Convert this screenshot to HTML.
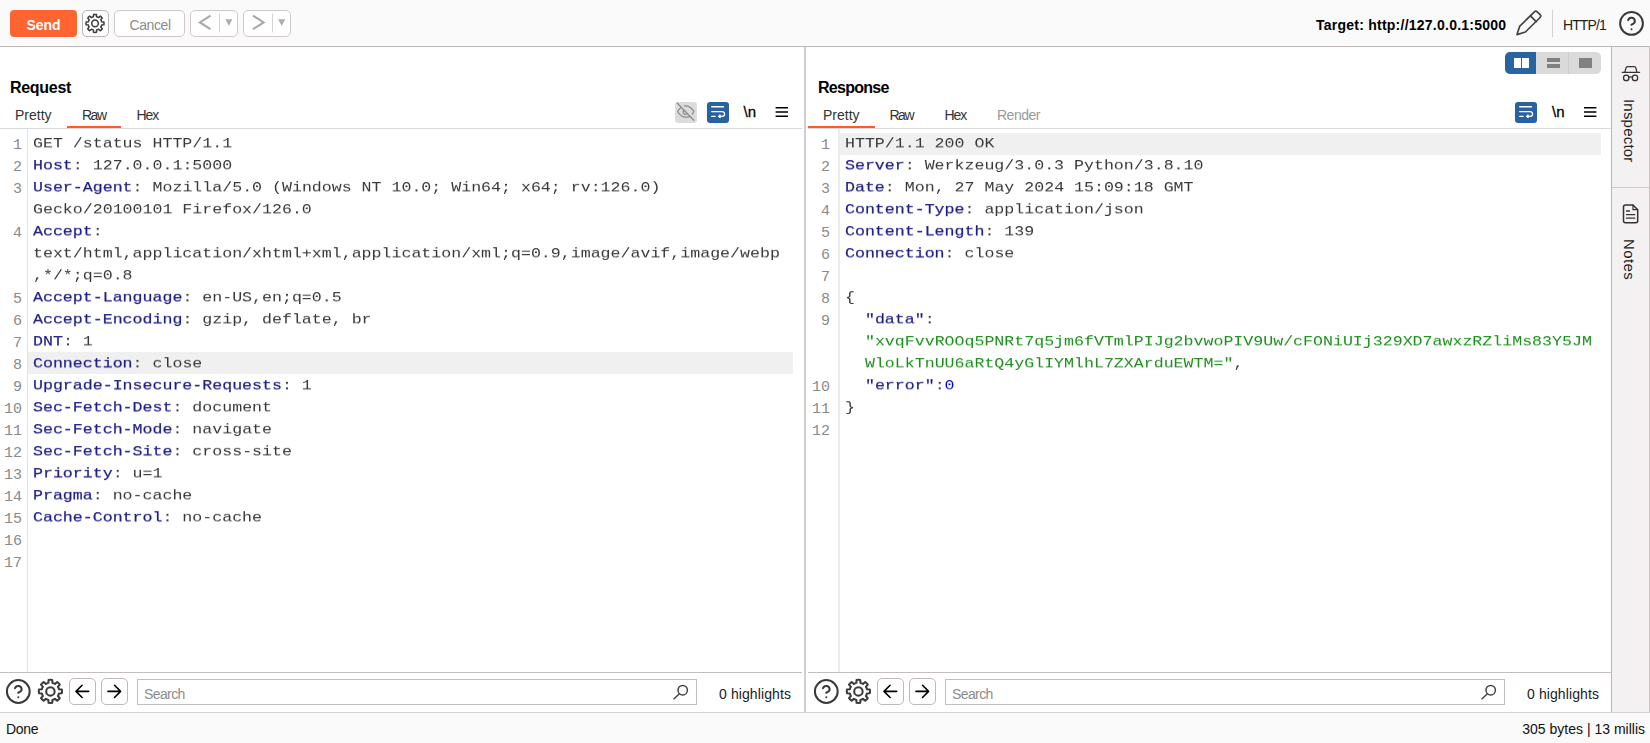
<!DOCTYPE html>
<html><head><meta charset="utf-8">
<style>
*{box-sizing:border-box;margin:0;padding:0}
html,body{width:1650px;height:743px;overflow:hidden;background:#fff}
body{font-family:"Liberation Sans",sans-serif;font-size:14px;color:#000;position:relative}
.abs{position:absolute}
.btn{position:absolute;top:10px;height:27px;border:1px solid #bcb5b5;border-radius:5px;background:#fff}
.sbtn{position:absolute;top:678px;height:27px;width:27px;border:1px solid #c0b9b9;border-radius:5px;background:#fff}
.t{position:absolute;white-space:nowrap;line-height:16px;height:16px}
.mono{font-family:"Liberation Mono",monospace;font-size:16.6px;white-space:pre;position:absolute;line-height:26px;color:#383838;transform:scaleY(.846154);transform-origin:0 0;will-change:transform}
.h{color:#1e1e8a;-webkit-text-stroke:.25px #1e1e8a}
.ln{position:absolute;font-family:"Liberation Mono",monospace;font-size:15px;color:#8a8a8a;text-align:right;line-height:22px;white-space:pre}
.hl{position:absolute;background:#f0f0f0;height:22px}
.g{color:#1a901a}
.b{color:#0000e6}
.k{color:#1e1e8a;-webkit-text-stroke:.2px #1e1e8a}
svg{position:absolute;left:0;top:0;overflow:visible}
</style></head><body>
<!-- top toolbar -->
<div class="abs" style="left:0;top:0;width:1650px;height:45px;background:#fafafa"></div>
<div class="abs" style="left:0;top:46px;width:1650px;height:1px;background:#bdb6b6"></div>
<div class="btn" style="left:10px;width:67px;background:#ff6431;border:none;border-radius:4px;box-shadow:0 0 0 1px #fff"></div>
<div class="t" style="left:10px;width:67px;top:17px;text-align:center;color:#fff;font-weight:bold;font-size:14px">Send</div>
<div class="btn" style="left:82px;width:27px"></div>
<div class="btn" style="left:114px;width:71px;border-color:#d0cbcb"></div>
<div class="t" style="left:129.5px;top:17px;font-size:14px;color:#8c8c8c;letter-spacing:-.4px">Cancel</div>
<div class="btn" style="left:190px;width:48px;border-color:#d0cbcb"></div>
<div class="btn" style="left:243px;width:48px;border-color:#d0cbcb"></div>
<div class="t" style="left:1316px;top:17px;font-size:14px;font-weight:bold;letter-spacing:.24px">Target: http://127.0.0.1:5000</div>
<div class="abs" style="left:1552px;top:10px;width:1px;height:27px;background:#d2d2d2"></div>
<div class="t" style="left:1563px;top:17px;font-size:14px;color:#222;letter-spacing:-.9px">HTTP/1</div>

<!-- right sidebar -->
<div class="abs" style="left:1611px;top:47px;width:39px;height:665px;background:#f3f1f1;border-left:1px solid #bdb6b6;border-right:1px solid #c8c2c2"></div>
<div class="abs" style="left:1612px;top:187px;width:37px;height:1px;background:#d0caca"></div>
<div class="t" style="left:1621px;top:99px;font-size:15px;letter-spacing:.2px;color:#222;transform-origin:0 100%;transform:translateY(-16px) rotate(90deg)">Inspector</div>
<div class="t" style="left:1621px;top:239px;font-size:15px;letter-spacing:.4px;color:#222;transform-origin:0 100%;transform:translateY(-16px) rotate(90deg)">Notes</div>

<!-- divider -->
<div class="abs" style="left:804px;top:47px;width:2px;height:665px;background:#d2cece"></div>

<!-- Request panel -->
<div class="t" style="left:10px;top:80px;font-size:16px;letter-spacing:-.3px;font-weight:bold">Request</div>
<div class="t" style="left:15px;top:107px;font-size:14px;color:#333">Pretty</div>
<div class="t" style="left:82px;top:107px;font-size:14px;color:#333;letter-spacing:-1.5px">Raw</div>
<div class="t" style="left:136.5px;top:107px;font-size:14px;color:#333;letter-spacing:-1.1px">Hex</div>
<div class="abs" style="left:0;top:128px;width:802px;height:1px;background:#d6dada"></div>
<div class="abs" style="left:67px;top:126px;width:54px;height:2px;background:#ff5a1f"></div>
<div class="abs" style="left:27px;top:129px;width:1px;height:543px;background:#e2e2e2"></div>
<div class="hl" style="left:28px;top:352px;width:765px"></div>
<div class="abs" style="left:675px;top:102px;width:22px;height:21px;border-radius:3px;background:#dcdcdc"></div>
<div class="abs" style="left:707px;top:102px;width:22px;height:21px;border-radius:3px;background:#2862a0"></div>
<div class="t" style="left:743.5px;top:104px;font-size:15px;color:#000;-webkit-text-stroke:.3px #000">\n</div>
<div class="ln" style="left:-18px;top:135px;width:40px">1
2
3

4


5
6
7
8
9
10
11
12
13
14
15
16
17</div>
<div class="mono" style="left:33px;top:133px">GET /status HTTP/1.1
<span class="h">Host</span>: 127.0.0.1:5000
<span class="h">User-Agent</span>: Mozilla/5.0 (Windows NT 10.0; Win64; x64; rv:126.0)
Gecko/20100101 Firefox/126.0
<span class="h">Accept</span>:
text/html,application/xhtml+xml,application/xml;q=0.9,image/avif,image/webp
,*/*;q=0.8
<span class="h">Accept-Language</span>: en-US,en;q=0.5
<span class="h">Accept-Encoding</span>: gzip, deflate, br
<span class="h">DNT</span>: 1
<span class="h">Connection</span>: close
<span class="h">Upgrade-Insecure-Requests</span>: 1
<span class="h">Sec-Fetch-Dest</span>: document
<span class="h">Sec-Fetch-Mode</span>: navigate
<span class="h">Sec-Fetch-Site</span>: cross-site
<span class="h">Priority</span>: u=1
<span class="h">Pragma</span>: no-cache
<span class="h">Cache-Control</span>: no-cache

</div>
<div class="abs" style="left:0;top:672px;width:802px;height:1px;background:#c4bebe"></div>
<div class="sbtn" style="left:69px"></div>
<div class="sbtn" style="left:101px"></div>
<div class="abs" style="left:137px;top:679px;width:560px;height:26px;border:1px solid #c4bdbd;background:#fff"></div>
<div class="t" style="left:144px;top:686px;font-size:14px;color:#8c8c8c;letter-spacing:-.6px">Search</div>
<div class="t" style="left:719px;top:686px;font-size:14px;color:#222;letter-spacing:.1px">0 highlights</div>

<!-- Response panel -->
<div class="abs" style="left:1505px;top:52px;width:96px;height:22px;border-radius:5px;background:#dadada;overflow:hidden">
  <div class="abs" style="left:0;top:0;width:31px;height:22px;background:#2a64a0"></div>
  <div class="abs" style="left:63px;top:0;width:1px;height:22px;background:#cdcdcd"></div>
  <div class="abs" style="left:8.5px;top:6px;width:7px;height:10px;background:#fff"></div>
  <div class="abs" style="left:17px;top:6px;width:7px;height:10px;background:#fff"></div>
  <div class="abs" style="left:42px;top:6px;width:13px;height:4px;background:#808080"></div>
  <div class="abs" style="left:42px;top:12px;width:13px;height:4px;background:#808080"></div>
  <div class="abs" style="left:74px;top:6px;width:13px;height:10px;background:#808080"></div>
</div>
<div class="t" style="left:818px;top:80px;font-size:16px;letter-spacing:-.72px;font-weight:bold">Response</div>
<div class="t" style="left:823px;top:107px;font-size:14px;color:#333">Pretty</div>
<div class="t" style="left:889.5px;top:107px;font-size:14px;color:#333;letter-spacing:-1.5px">Raw</div>
<div class="t" style="left:944.5px;top:107px;font-size:14px;color:#333;letter-spacing:-1.1px">Hex</div>
<div class="t" style="left:997px;top:107px;font-size:14px;color:#9a9a9a;letter-spacing:-.5px">Render</div>
<div class="abs" style="left:808px;top:128px;width:803px;height:1px;background:#d6dada"></div>
<div class="abs" style="left:808px;top:126px;width:67px;height:2px;background:#ff5a1f"></div>
<div class="abs" style="left:838px;top:129px;width:2px;height:543px;background:#ececec"></div>
<div class="hl" style="left:840px;top:133px;width:761px"></div>
<div class="abs" style="left:1515px;top:102px;width:22px;height:21px;border-radius:3px;background:#2862a0"></div>
<div class="t" style="left:1552px;top:104px;font-size:15px;color:#000;-webkit-text-stroke:.3px #000">\n</div>
<div class="ln" style="left:790px;top:135px;width:40px">1
2
3
4
5
6
7
8
9


10
11
12</div>
<div class="mono" style="left:845px;top:133px">HTTP/1.1 200 OK
<span class="h">Server</span>: Werkzeug/3.0.3 Python/3.8.10
<span class="h">Date</span>: Mon, 27 May 2024 15:09:18 GMT
<span class="h">Content-Type</span>: application/json
<span class="h">Content-Length</span>: 139
<span class="h">Connection</span>: close

{
  <span class="k">"data"</span>:
  <span class="g">"xvqFvvROOq5PNRt7q5jm6fVTmlPIJg2bvwoPIV9Uw/cFONiUIj329XD7awxzRZliMs83Y5JM</span>
  <span class="g">WloLkTnUU6aRtQ4yGlIYMlhL7ZXArduEWTM="</span>,
  <span class="k">"error"</span>:<span class="b">0</span>
}
</div>
<div class="abs" style="left:808px;top:672px;width:803px;height:1px;background:#c4bebe"></div>
<div class="sbtn" style="left:877px"></div>
<div class="sbtn" style="left:909px"></div>
<div class="abs" style="left:945px;top:679px;width:560px;height:26px;border:1px solid #c4bdbd;background:#fff"></div>
<div class="t" style="left:952px;top:686px;font-size:14px;color:#8c8c8c;letter-spacing:-.6px">Search</div>
<div class="t" style="left:1527px;top:686px;font-size:14px;color:#222;letter-spacing:.1px">0 highlights</div>

<!-- status bar -->
<div class="abs" style="left:0;top:712px;width:1650px;height:2px;background:#fff"></div><div class="abs" style="left:0;top:714px;width:1650px;height:29px;background:#fafafa"></div>
<div class="abs" style="left:0;top:712px;width:1650px;height:1px;background:#d0d0d0"></div>
<div class="t" style="left:6px;top:721px;font-size:14px;color:#111;letter-spacing:-.3px">Done</div>
<div class="t" style="right:5px;top:721px;font-size:14px;color:#111">305 bytes | 13 millis</div>

<!-- icons -->
<svg width="1650" height="743" viewBox="0 0 1650 743" fill="none" stroke-linecap="round" stroke-linejoin="round">
<defs>
 <g id="gear"><path d="M-1.75 -7.29L-1.55 -9.78A9.90 9.90 0 0 1 1.55 -9.78L1.75 -7.29A7.50 7.50 0 0 1 3.92 -6.39L3.92 -6.39L5.82 -8.01A9.90 9.90 0 0 1 8.01 -5.82L6.39 -3.92A7.50 7.50 0 0 1 7.29 -1.75L7.29 -1.75L9.78 -1.55A9.90 9.90 0 0 1 9.78 1.55L7.29 1.75A7.50 7.50 0 0 1 6.39 3.92L6.39 3.92L8.01 5.82A9.90 9.90 0 0 1 5.82 8.01L3.92 6.39A7.50 7.50 0 0 1 1.75 7.29L1.75 7.29L1.55 9.78A9.90 9.90 0 0 1 -1.55 9.78L-1.75 7.29A7.50 7.50 0 0 1 -3.92 6.39L-3.92 6.39L-5.82 8.01A9.90 9.90 0 0 1 -8.01 5.82L-6.39 3.92A7.50 7.50 0 0 1 -7.29 1.75L-7.29 1.75L-9.78 1.55A9.90 9.90 0 0 1 -9.78 -1.55L-7.29 -1.75A7.50 7.50 0 0 1 -6.39 -3.92L-6.39 -3.92L-8.01 -5.82A9.90 9.90 0 0 1 -5.82 -8.01L-3.92 -6.39A7.50 7.50 0 0 1 -1.75 -7.29Z"/><circle r="3.6"/></g>
 <g id="help"><circle r="11.4"/><path d="M-3.350 -3.300a3.450 3.450 0 0 1 6.700 1.150c0 2.300-3.450 3.450-3.450 3.450M0 5.800h.01"/></g>
 <g id="larr"><path d="M6.3 0H-6M-.2 -6.1L-6.3 0L-.2 6.1"/></g>
 <g id="wrap" stroke="#fff" stroke-width="1.35"><path d="M-6.300 -5.800H5.500M-6.300 -.9H4.200a2.350 2.350 0 0 1 0 4.700H.8M-6.300 3.800H-2.800"/><path d="M1.900 2.400L.3 3.800L1.900 5.200Z" fill="#fff" stroke-width="1"/></g>
 <g id="burger" stroke="#000" stroke-width="1.4" stroke-linecap="butt"><path d="M-6.2 -4.3H6.2M-6.2 0H6.2M-6.2 4.3H6.2"/></g>
 <g id="mag" stroke="#444" stroke-width="1.5"><circle r="4.7"/><path d="M-3.3 3.5L-8.6 8.6"/></g>
</defs>
<!-- toolbar gear -->
<use href="#gear" transform="translate(95 23.4) scale(.91)" stroke="#3a3a3a" stroke-width="1.65"/>
<!-- < and > -->
<g stroke="#a8a8a8" stroke-width="2" stroke-linecap="butt" stroke-linejoin="miter">
 <path d="M210.5 15.6L199.8 22.4L210.5 29.2"/>
 <path d="M253 15.6L263.7 22.4L253 29.2"/>
</g>
<path d="M219.5 14V32M272.5 14V32" stroke="#d4d4d4" stroke-width="1"/>
<path d="M225.4 19.2h7l-3.5 6.8zM278.2 19.2h7l-3.5 6.8z" fill="#adadad" stroke="none"/>
<!-- pencil -->
<g stroke="#444" stroke-width="1.7">
 <path d="M1517 34.6L1519.6 26.4L1534.4 11.8a2 2 0 0 1 2.8 0L1540.1 14.7a2 2 0 0 1 0 2.8L1525.4 32Z"/>
 <path d="M1530.4 15.8L1536.2 21.6"/>
</g>
<use href="#help" transform="translate(1631.5 23.4)" stroke="#3a3a3a" stroke-width="2"/>
<!-- request icons -->
<g stroke="#8a8a8a" stroke-width="1.25">
 <path d="M684.4 105.8C688 105.500 691.500 107.500 693.800 111.300C693.300 112.500 692.800 113.400 692.300 114.200"/>
 <path d="M680.800 107.700C679.500 108.700 678.400 110 677.600 111.500C680 115.500 683.500 117.300 686.300 117.200C687.400 117.200 688.400 117 689.300 116.600"/>
 <path d="M683.600 110.600C683 111.800 683.200 113.200 684.200 113.900C684.900 114.400 685.800 114.400 686.500 114"/>
 <path d="M677.100 103L693.800 120.300"/>
</g>
<use href="#wrap" transform="translate(718 112.500)"/>
<use href="#burger" transform="translate(781.800 112)"/>
<use href="#help" transform="translate(18.300 691.500)" stroke="#3a3a3a" stroke-width="2"/>
<use href="#gear" transform="translate(50.400 691.400) scale(1.17)" stroke="#3a3a3a" stroke-width="1.75"/>
<use href="#larr" transform="translate(82.300 691.400)" stroke="#000" stroke-width="1.6"/>
<use href="#larr" transform="translate(114.300 691.400) scale(-1 1)" stroke="#000" stroke-width="1.6"/>
<use href="#mag" transform="translate(682.700 690.200)"/>
<!-- response icons -->
<use href="#wrap" transform="translate(1526 112.500)"/>
<use href="#burger" transform="translate(1590.200 112)"/>
<use href="#help" transform="translate(826.300 691.500)" stroke="#3a3a3a" stroke-width="2"/>
<use href="#gear" transform="translate(858.400 691.400) scale(1.17)" stroke="#3a3a3a" stroke-width="1.75"/>
<use href="#larr" transform="translate(890.300 691.400)" stroke="#000" stroke-width="1.6"/>
<use href="#larr" transform="translate(922.300 691.400) scale(-1 1)" stroke="#000" stroke-width="1.6"/>
<use href="#mag" transform="translate(1490.700 690.200)"/>
<!-- inspector icon -->
<g stroke="#333" stroke-width="1.3" transform="translate(0 .7)">
 <path d="M1622.200 71.600H1639.600M1624.800 71.600L1626 67.200a1.600 1.600 0 0 1 1.500-1.200H1634.300a1.600 1.600 0 0 1 1.500 1.200L1637 71.600"/>
 <circle cx="1626.200" cy="77.200" r="2.700"/><circle cx="1635" cy="77.200" r="2.700"/>
 <path d="M1628.900 76.600q1.700-.9 3.400 0"/>
</g>
<!-- notes icon -->
<g stroke="#333" stroke-width="1.5">
 <path d="M1625.500 205H1633L1637.700 209.700V220.700a2 2 0 0 1-2 2H1625.500a2 2 0 0 1-2-2V207a2 2 0 0 1 2-2z"/>
 <path d="M1633 205V209.700H1637.700" stroke-width="1.200"/>
 <path d="M1626.500 211H1629.500M1626.500 214.600H1634.800M1626.500 218.200H1634.800" stroke-width="1.300"/>
</g>
</svg>
</body></html>
